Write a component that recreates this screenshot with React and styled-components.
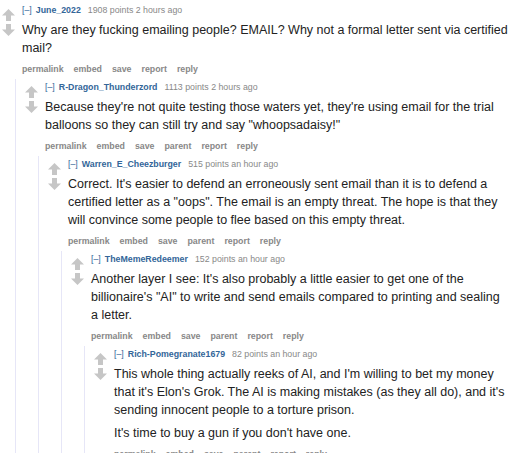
import React from 'react';
import styled, { createGlobalStyle } from 'styled-components';

const GlobalStyle = createGlobalStyle`
  body {
    margin: 0;
    background: #fff;
    font-family: "Liberation Sans", Arial, Helvetica, sans-serif;
  }
`;

const Thread = styled.div`
  padding: 2px 1px 0 0;
`;

const Thing = styled.div`
  margin-left: ${props => (props.$nested ? '7px' : '0')};
  padding-top: 3px;
`;

const Row = styled.div`
  display: flex;
  align-items: flex-start;
`;

const Votes = styled.div`
  display: flex;
  flex-direction: column;
  align-items: center;
  gap: 3px;
  width: 13px;
  margin: 4px 7px 0 2px;
  flex-shrink: 0;
`;

const Entry = styled.div`
  flex: 1;
  min-width: 0;
`;

const Tagline = styled.div`
  font-size: 8.8px;
  line-height: 11px;
  color: #888;
`;

const Toggle = styled.span`
  color: #369;
  margin-right: 4px;
`;

const Author = styled.span`
  color: #369;
  font-weight: bold;
  margin-right: 7px;
`;

const Body = styled.div`
  font-size: 12.5px;
  line-height: 18px;
  color: #222;

  p {
    margin: 5px 0;
  }
`;

const Buttons = styled.ul`
  display: flex;
  gap: 10px;
  list-style: none;
  margin: 0;
  padding: 2px 0 4px;
  font-size: 8.8px;
  line-height: 11px;
  font-weight: bold;
  color: #888;
`;

const Child = styled.div`
  margin-left: 15px;
  border-left: 1px solid #e6e6f7;
`;

const Arrow = ({ down }) => (
  <svg width="13" height="12" viewBox="0 0 13 12" style={down ? { transform: 'rotate(180deg)' } : undefined}>
    <polygon points="6.5,0 13,6.5 9,6.5 9,12 4,12 4,6.5 0,6.5" fill="#c6c6c6" />
  </svg>
);

const comments = {
  author: 'June_2022',
  points: 1908,
  time: '2 hours ago',
  body: ['Why are they fucking emailing people? EMAIL? Why not a formal letter sent via certified mail?'],
  top: true,
  replies: [
    {
      author: 'R-Dragon_Thunderzord',
      points: 1113,
      time: '2 hours ago',
      body: [
        'Because they\'re not quite testing those waters yet, they\'re using email for the trial balloons so they can still try and say "whoopsadaisy!"'
      ],
      replies: [
        {
          author: 'Warren_E_Cheezburger',
          points: 515,
          time: 'an hour ago',
          body: [
            'Correct. It\'s easier to defend an erroneously sent email than it is to defend a certified letter as a "oops". The email is an empty threat. The hope is that they will convince some people to flee based on this empty threat.'
          ],
          replies: [
            {
              author: 'TheMemeRedeemer',
              points: 152,
              time: 'an hour ago',
              body: [
                'Another layer I see: It\'s also probably a little easier to get one of the billionaire\'s "AI" to write and send emails compared to printing and sealing a letter.'
              ],
              replies: [
                {
                  author: 'Rich-Pomegranate1679',
                  points: 82,
                  time: 'an hour ago',
                  body: [
                    'This whole thing actually reeks of AI, and I\'m willing to bet my money that it\'s Elon\'s Grok. The AI is making mistakes (as they all do), and it\'s sending innocent people to a torture prison.',
                    'It\'s time to buy a gun if you don\'t have one.'
                  ],
                  replies: []
                }
              ]
            }
          ]
        }
      ]
    }
  ]
};

function Comment({ data, nested }) {
  const actions = data.top
    ? ['permalink', 'embed', 'save', 'report', 'reply']
    : ['permalink', 'embed', 'save', 'parent', 'report', 'reply'];
  return (
    <Thing $nested={nested}>
      <Row>
        <Votes>
          <Arrow />
          <Arrow down />
        </Votes>
        <Entry>
          <Tagline>
            <Toggle>[–]</Toggle>
            <Author>{data.author}</Author>
            {data.points} points {data.time}
          </Tagline>
          <Body>
            {data.body.map((p, i) => (
              <p key={i}>{p}</p>
            ))}
          </Body>
          <Buttons>
            {actions.map(a => (
              <li key={a}>{a}</li>
            ))}
          </Buttons>
        </Entry>
      </Row>
      {data.replies.length > 0 && (
        <Child>
          {data.replies.map(r => (
            <Comment key={r.author} data={r} nested />
          ))}
        </Child>
      )}
    </Thing>
  );
}

export default function App() {
  return (
    <>
      <GlobalStyle />
      <Thread>
        <Comment data={comments} />
      </Thread>
    </>
  );
}
